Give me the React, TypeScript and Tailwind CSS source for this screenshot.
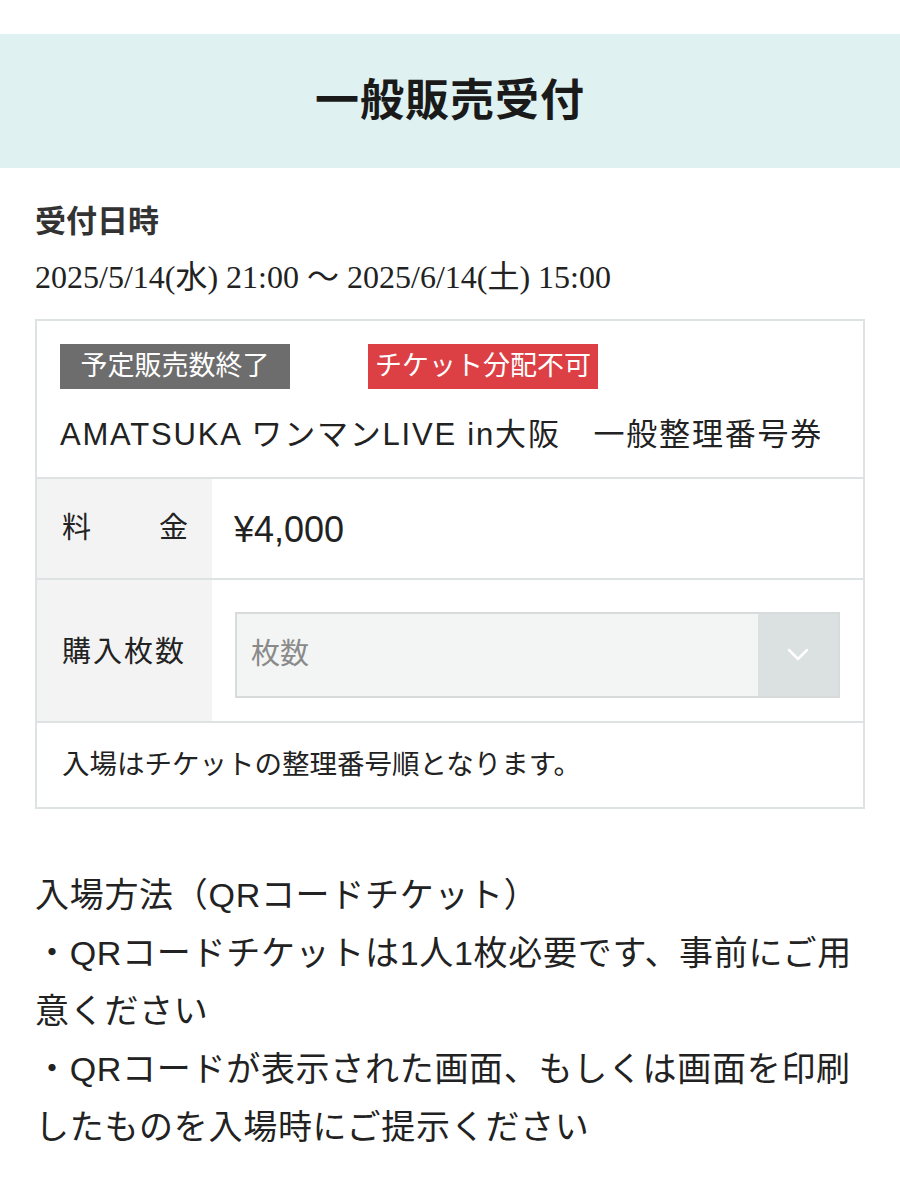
import React from 'react';

const jp = { fontFamily: '"Liberation Sans", "Noto Sans CJK JP", "Noto Sans", sans-serif' };
const serif = { fontFamily: '"Liberation Serif", "Noto Sans CJK JP", serif' };

const Badge: React.FC<{ color: string; children: React.ReactNode }> = ({ color, children }) => (
    <span className={`inline-flex items-center justify-center w-[230px] h-[45px] text-[27px] leading-none text-white ${color}`}>
        {children}
    </span>
);

const App: React.FC = () => {
    return (
        <div className="w-[900px] min-h-[1200px] bg-white pt-[34px] text-[#222]" style={jp}>
            <div className="h-[134px] bg-[#dff2f1] flex items-center justify-center">
                <h1 className="text-[44px] font-bold text-[#1a1a1a] tracking-[1px]">一般販売受付</h1>
            </div>

            <div className="px-[35px]">
                <h2 className="mt-[34px] text-[31px] leading-[40px] font-bold text-[#333]">受付日時</h2>
                <p className="mt-[15px] text-[32px] leading-[40px] text-[#222]" style={serif}>
                    2025/5/14(水) 21:00 ～ 2025/6/14(土) 15:00
                </p>

                {/* チケット情報 */}
                <div className="mt-[22px] border-2 border-[#dde3e3]">
                    <div className="border-b-2 border-[#dde3e3] pt-[23px] pb-[22px] px-[23px]">
                        <div className="flex gap-[78px]">
                            <Badge color="bg-[#6d6d6d]">予定販売数終了</Badge>
                            <Badge color="bg-[#dc4045]">チケット分配不可</Badge>
                        </div>
                        <p className="mt-[26px] text-[31px] leading-[40px] tracking-[1.8px] whitespace-nowrap">
                            AMATSUKA ワンマンLIVE in大阪　一般整理番号券
                        </p>
                    </div>

                    <div className="flex border-b-2 border-[#dde3e3] h-[101px]">
                        <div className="w-[175px] bg-[#f3f3f3] flex items-center pl-[25px]">
                            <div className="w-[126px] flex justify-between text-[29px]">
                                <span>料</span>
                                <span>金</span>
                            </div>
                        </div>
                        <div className="flex-1 flex items-center pl-[22px] text-[36px] pt-[3px]">¥4,000</div>
                    </div>

                    <div className="flex border-b-2 border-[#dde3e3]">
                        <div className="w-[175px] bg-[#f3f3f3] flex items-center pl-[25px] pt-[4px] text-[29px] tracking-[2px]">
                            購入枚数
                        </div>
                        <div className="flex-1 pt-[32px] pb-[23px] px-[23px]">
                            <div className="h-[86px] flex border-2 border-[#d8dbdb] bg-[#f3f4f4]">
                                <div className="flex-1 flex items-center pl-[14px] text-[29px] text-[#8a8a8a]">枚数</div>
                                <div className="w-[80px] bg-[#dbe0e0] flex items-center justify-center">
                                    <svg width="22" height="14" viewBox="0 0 22 14">
                                        <polyline
                                            points="2,2 11,11 20,2"
                                            fill="none"
                                            stroke="#ffffff"
                                            strokeWidth="2.5"
                                            strokeLinecap="round"
                                            strokeLinejoin="round"
                                        />
                                    </svg>
                                </div>
                            </div>
                        </div>
                    </div>

                    <div className="h-[84px] flex items-center pl-[25px] text-[27.5px]">
                        入場はチケットの整理番号順となります。
                    </div>
                </div>

                <div className="mt-[57px] text-[34px] leading-[58px] tracking-[0.7px] text-[#222] whitespace-nowrap">
                    <p>入場方法（QRコードチケット）</p>
                    <p>・QRコードチケットは1人1枚必要です、事前にご用</p>
                    <p>意ください</p>
                    <p>・QRコードが表示された画面、もしくは画面を印刷</p>
                    <p>したものを入場時にご提示ください</p>
                </div>
            </div>
        </div>
    );
};

export default App;
